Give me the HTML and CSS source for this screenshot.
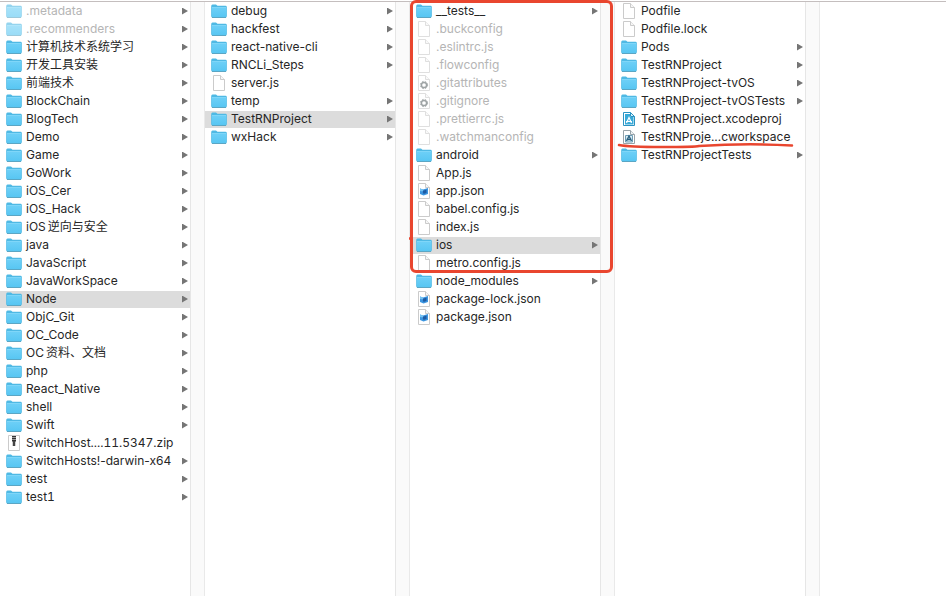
FILE: index.html
```html
<!DOCTYPE html>
<html lang="en">
<head>
<meta charset="utf-8">
<title>Node</title>
<link rel="stylesheet" href="styles.css">
</head>
<body>
<svg class="sprite" aria-hidden="true">
  <defs>
    <linearGradient id="blue" x1="0" y1="0" x2="0" y2="1"><stop offset="0" stop-color="#6ccff7"/><stop offset="1" stop-color="#58c6f2"/></linearGradient>
  </defs>
  <symbol id="folder" viewBox="0 0 16 16">
    <path d="M.2 3.200Q.2 1.500 1.500 1.500H5l1.500 1.300h8q1.300 0 1.300 1.200v9q0 1.500-1.300 1.500h-13Q.2 14.500.2 13z" fill="#4fb9e4"/>
    <path d="M.8 5h14.400v8q0 1-1 1H1.800q-1 0-1-1z" fill="url(#blue)"/>
    <path d="M1 4.500h14" stroke="#7fd6f8"/>
    <path d="M1 14.500h14" stroke="#5ba6c4"/>
  </symbol>
  <symbol id="file" viewBox="0 0 16 16">
    <path d="M2.500.5h7l4 4v11h-11z" fill="#fff" stroke="#cbcbcb"/>
    <path d="M9.500.5v4h4" fill="#f6f6f6" stroke="#cbcbcb"/>
  </symbol>
  <symbol id="gear" viewBox="0 0 16 16">
    <use href="#file"/>
    <circle cx="8" cy="10" r="2.600" fill="none" stroke="#5f686a" stroke-width="1.500"/>
    <circle cx="8" cy="10" r="3.600" fill="none" stroke="#5f686a" stroke-dasharray="1.500 1.400"/>
  </symbol>
  <symbol id="json" viewBox="0 0 16 16">
    <use href="#file"/>
    <path d="M4 5.500l3 1 5-1.500v6l-4.500 1.500L4 11z" fill="#3b95e0"/>
    <path d="M6.500 8l4-1.500v3.500l-3 1z" fill="#1d5aa3"/>
    <path d="M4 5.500l3 1v2L4 8z" fill="#74c2f2"/>
  </symbol>
  <symbol id="zip" viewBox="0 0 16 16">
    <path d="M2.500.5h11v15h-11z" fill="#fff" stroke="#cbcbcb"/>
    <path d="M8 1v6" stroke="#333" stroke-width="4" stroke-dasharray="1.500 .5"/>
    <path d="M8 6v5" stroke="#444" stroke-width="2.500"/>
  </symbol>
  <symbol id="project" viewBox="0 0 16 16">
    <path d="M2.500 1.500h7l4 4v9h-11z" fill="#fff" stroke="#2a93c2"/>
    <path d="M4 3h5v3h3.500v7.500H4z" fill="#38a9d8"/>
    <path d="M9.500 1.500v4h4z" fill="#d6eef8" stroke="#2a93c2"/>
    <path d="M5.500 12L8 6.500l2.500 5.500M5 10.500h6" fill="none" stroke="#fff" stroke-width="1.200"/>
  </symbol>
  <symbol id="workspace" viewBox="0 0 16 16">
    <path d="M2.500 1.500h7l4 4v9h-11z" fill="#fff" stroke="#98a3a9"/>
    <path d="M9.500 1.500v4h4" fill="#eef2f4" stroke="#98a3a9"/>
    <path d="M4.500 6.500h7v6.500h-7z" fill="#d9ebf4" stroke="#6d9db5"/>
    <path d="M5.500 12L8 7l2.500 5M5.500 10.500h5" fill="none" stroke="#2a607e" stroke-width="1.300"/>
  </symbol>
</svg>
<main class="browser">
  <section class="column">
    <ul class="list">
      <li><a class="row dim" href="#"><svg class="icon"><use href="#folder"/></svg><span class="name">.metadata</span><i class="arrow"></i></a></li>
      <li><a class="row dim" href="#"><svg class="icon"><use href="#folder"/></svg><span class="name">.recommenders</span><i class="arrow"></i></a></li>
      <li><a class="row" href="#"><svg class="icon"><use href="#folder"/></svg><span class="name">计算机技术系统学习</span><i class="arrow"></i></a></li>
      <li><a class="row" href="#"><svg class="icon"><use href="#folder"/></svg><span class="name">开发工具安装</span><i class="arrow"></i></a></li>
      <li><a class="row" href="#"><svg class="icon"><use href="#folder"/></svg><span class="name">前端技术</span><i class="arrow"></i></a></li>
      <li><a class="row" href="#"><svg class="icon"><use href="#folder"/></svg><span class="name">BlockChain</span><i class="arrow"></i></a></li>
      <li><a class="row" href="#"><svg class="icon"><use href="#folder"/></svg><span class="name">BlogTech</span><i class="arrow"></i></a></li>
      <li><a class="row" href="#"><svg class="icon"><use href="#folder"/></svg><span class="name">Demo</span><i class="arrow"></i></a></li>
      <li><a class="row" href="#"><svg class="icon"><use href="#folder"/></svg><span class="name">Game</span><i class="arrow"></i></a></li>
      <li><a class="row" href="#"><svg class="icon"><use href="#folder"/></svg><span class="name">GoWork</span><i class="arrow"></i></a></li>
      <li><a class="row" href="#"><svg class="icon"><use href="#folder"/></svg><span class="name">iOS_Cer</span><i class="arrow"></i></a></li>
      <li><a class="row" href="#"><svg class="icon"><use href="#folder"/></svg><span class="name">iOS_Hack</span><i class="arrow"></i></a></li>
      <li><a class="row" href="#"><svg class="icon"><use href="#folder"/></svg><span class="name mixed"><span>iOS</span><span>逆向与安全</span></span><i class="arrow"></i></a></li>
      <li><a class="row" href="#"><svg class="icon"><use href="#folder"/></svg><span class="name">java</span><i class="arrow"></i></a></li>
      <li><a class="row" href="#"><svg class="icon"><use href="#folder"/></svg><span class="name">JavaScript</span><i class="arrow"></i></a></li>
      <li><a class="row" href="#"><svg class="icon"><use href="#folder"/></svg><span class="name">JavaWorkSpace</span><i class="arrow"></i></a></li>
      <li><a class="row selected" href="#"><svg class="icon"><use href="#folder"/></svg><span class="name">Node</span><i class="arrow"></i></a></li>
      <li><a class="row" href="#"><svg class="icon"><use href="#folder"/></svg><span class="name">ObjC_Git</span><i class="arrow"></i></a></li>
      <li><a class="row" href="#"><svg class="icon"><use href="#folder"/></svg><span class="name">OC_Code</span><i class="arrow"></i></a></li>
      <li><a class="row" href="#"><svg class="icon"><use href="#folder"/></svg><span class="name mixed"><span>OC</span><span>资料、文档</span></span><i class="arrow"></i></a></li>
      <li><a class="row" href="#"><svg class="icon"><use href="#folder"/></svg><span class="name">php</span><i class="arrow"></i></a></li>
      <li><a class="row" href="#"><svg class="icon"><use href="#folder"/></svg><span class="name">React_Native</span><i class="arrow"></i></a></li>
      <li><a class="row" href="#"><svg class="icon"><use href="#folder"/></svg><span class="name">shell</span><i class="arrow"></i></a></li>
      <li><a class="row" href="#"><svg class="icon"><use href="#folder"/></svg><span class="name">Swift</span><i class="arrow"></i></a></li>
      <li><a class="row" href="#"><svg class="icon"><use href="#zip"/></svg><span class="name numeric">SwitchHost....11.5347.zip</span></a></li>
      <li><a class="row" href="#"><svg class="icon"><use href="#folder"/></svg><span class="name">SwitchHosts!-darwin-x64</span><i class="arrow"></i></a></li>
      <li><a class="row" href="#"><svg class="icon"><use href="#folder"/></svg><span class="name">test</span><i class="arrow"></i></a></li>
      <li><a class="row" href="#"><svg class="icon"><use href="#folder"/></svg><span class="name numeric">test1</span><i class="arrow"></i></a></li>
    </ul>
  </section>
  <section class="column">
    <ul class="list">
      <li><a class="row" href="#"><svg class="icon"><use href="#folder"/></svg><span class="name">debug</span><i class="arrow"></i></a></li>
      <li><a class="row" href="#"><svg class="icon"><use href="#folder"/></svg><span class="name">hackfest</span><i class="arrow"></i></a></li>
      <li><a class="row" href="#"><svg class="icon"><use href="#folder"/></svg><span class="name">react-native-cli</span><i class="arrow"></i></a></li>
      <li><a class="row" href="#"><svg class="icon"><use href="#folder"/></svg><span class="name">RNCLi_Steps</span><i class="arrow"></i></a></li>
      <li><a class="row" href="#"><svg class="icon"><use href="#file"/></svg><span class="name">server.js</span></a></li>
      <li><a class="row" href="#"><svg class="icon"><use href="#folder"/></svg><span class="name">temp</span><i class="arrow"></i></a></li>
      <li><a class="row selected" href="#"><svg class="icon"><use href="#folder"/></svg><span class="name">TestRNProject</span><i class="arrow"></i></a></li>
      <li><a class="row" href="#"><svg class="icon"><use href="#folder"/></svg><span class="name">wxHack</span><i class="arrow"></i></a></li>
    </ul>
  </section>
  <section class="column">
    <ul class="list">
      <li><a class="row" href="#"><svg class="icon"><use href="#folder"/></svg><span class="name">__tests__</span><i class="arrow"></i></a></li>
      <li><a class="row dim" href="#"><svg class="icon"><use href="#file"/></svg><span class="name">.buckconfig</span></a></li>
      <li><a class="row dim" href="#"><svg class="icon"><use href="#file"/></svg><span class="name">.eslintrc.js</span></a></li>
      <li><a class="row dim" href="#"><svg class="icon"><use href="#file"/></svg><span class="name">.flowconfig</span></a></li>
      <li><a class="row dim" href="#"><svg class="icon"><use href="#gear"/></svg><span class="name">.gitattributes</span></a></li>
      <li><a class="row dim" href="#"><svg class="icon"><use href="#gear"/></svg><span class="name">.gitignore</span></a></li>
      <li><a class="row dim" href="#"><svg class="icon"><use href="#file"/></svg><span class="name">.prettierrc.js</span></a></li>
      <li><a class="row dim" href="#"><svg class="icon"><use href="#file"/></svg><span class="name">.watchmanconfig</span></a></li>
      <li><a class="row" href="#"><svg class="icon"><use href="#folder"/></svg><span class="name">android</span><i class="arrow"></i></a></li>
      <li><a class="row" href="#"><svg class="icon"><use href="#file"/></svg><span class="name">App.js</span></a></li>
      <li><a class="row" href="#"><svg class="icon"><use href="#json"/></svg><span class="name">app.json</span></a></li>
      <li><a class="row" href="#"><svg class="icon"><use href="#file"/></svg><span class="name">babel.config.js</span></a></li>
      <li><a class="row" href="#"><svg class="icon"><use href="#file"/></svg><span class="name">index.js</span></a></li>
      <li><a class="row selected" href="#"><svg class="icon"><use href="#folder"/></svg><span class="name">ios</span><i class="arrow"></i></a></li>
      <li><a class="row" href="#"><svg class="icon"><use href="#file"/></svg><span class="name">metro.config.js</span></a></li>
      <li><a class="row" href="#"><svg class="icon"><use href="#folder"/></svg><span class="name">node_modules</span><i class="arrow"></i></a></li>
      <li><a class="row" href="#"><svg class="icon"><use href="#json"/></svg><span class="name">package-lock.json</span></a></li>
      <li><a class="row" href="#"><svg class="icon"><use href="#json"/></svg><span class="name">package.json</span></a></li>
    </ul>
    <div class="frame"></div>
  </section>
  <section class="column">
    <ul class="list">
      <li><a class="row" href="#"><svg class="icon"><use href="#file"/></svg><span class="name">Podfile</span></a></li>
      <li><a class="row" href="#"><svg class="icon"><use href="#file"/></svg><span class="name">Podfile.lock</span></a></li>
      <li><a class="row" href="#"><svg class="icon"><use href="#folder"/></svg><span class="name">Pods</span><i class="arrow"></i></a></li>
      <li><a class="row" href="#"><svg class="icon"><use href="#folder"/></svg><span class="name">TestRNProject</span><i class="arrow"></i></a></li>
      <li><a class="row" href="#"><svg class="icon"><use href="#folder"/></svg><span class="name">TestRNProject-tvOS</span><i class="arrow"></i></a></li>
      <li><a class="row" href="#"><svg class="icon"><use href="#folder"/></svg><span class="name">TestRNProject-tvOSTests</span><i class="arrow"></i></a></li>
      <li><a class="row" href="#"><svg class="icon"><use href="#project"/></svg><span class="name">TestRNProject.xcodeproj</span></a></li>
      <li><a class="row" href="#"><svg class="icon"><use href="#workspace"/></svg><span class="name">TestRNProje...cworkspace</span><svg class="stroke" viewBox="0 0 178 6"><path d="M2 2Q12 4 45 4T82 3Q130 0 175 2.500" fill="none" stroke="#e9462f" stroke-width="2.500" stroke-linecap="round"/></svg></a></li>
      <li><a class="row" href="#"><svg class="icon"><use href="#folder"/></svg><span class="name">TestRNProjectTests</span><i class="arrow"></i></a></li>
    </ul>
  </section>
  <section class="rest"></section>
</main>
</body>
</html>
```
FILE: styles.css
```css
* {
  box-sizing: border-box;
}

body {
  margin: 0;
  padding-top: 1px;
  background: #fff;
  color: #262626;
  font: 12px/18px Inter, "Noto Sans CJK SC", sans-serif;
}

.sprite {
  position: absolute;
  width: 0;
  height: 0;
}

.browser {
  display: flex;
  min-height: calc(100vh - 1px);
  border-top: 1px solid #c4bebe;
}

.column {
  position: relative;
  display: flex;
  flex: 0 0 205px;
  padding-right: 13px;
  background: #fafafa;
  border-right: 1px solid #e9e9e9;
}

.list {
  flex: 1;
  min-width: 0;
  margin: 0;
  padding: 0;
  list-style: none;
  background: #fff;
  border-right: 1px solid #e6e6e6;
}

.rest {
  flex: 1;
}

.row {
  position: relative;
  display: flex;
  align-items: center;
  gap: 4px;
  height: 18px;
  padding: 0 2px 0 6px;
  color: inherit;
  text-decoration: none;
  white-space: nowrap;
}

.selected {
  background: linear-gradient(#fff 1px, #dcdcdc 1px);
}

.icon {
  flex: none;
  width: 16px;
  height: 16px;
}

.name {
  flex: 1;
}

.numeric {
  font-variant-numeric: tabular-nums;
}

.mixed {
  display: flex;
  gap: 2px;
}

.arrow {
  width: 6px;
  height: 7px;
  background: #757575;
  clip-path: polygon(0 0, 100% 50%, 0 100%);
}

.dim .name {
  color: #b5b5b5;
}

.dim .icon {
  opacity: 0.6;
}

.frame {
  position: absolute;
  top: -2px;
  left: 0;
  right: 1px;
  height: 273px;
  border: 3px solid #e9462f;
  border-radius: 6px;
}

.frame::before {
  content: "";
  position: absolute;
  top: 234px;
  left: -4px;
  width: 2px;
  height: 3px;
  border-radius: 1px;
  background: #e9462f;
}

.stroke {
  position: absolute;
  left: 2px;
  bottom: -3px;
  width: 178px;
  height: 6px;
  z-index: 1;
}
```
